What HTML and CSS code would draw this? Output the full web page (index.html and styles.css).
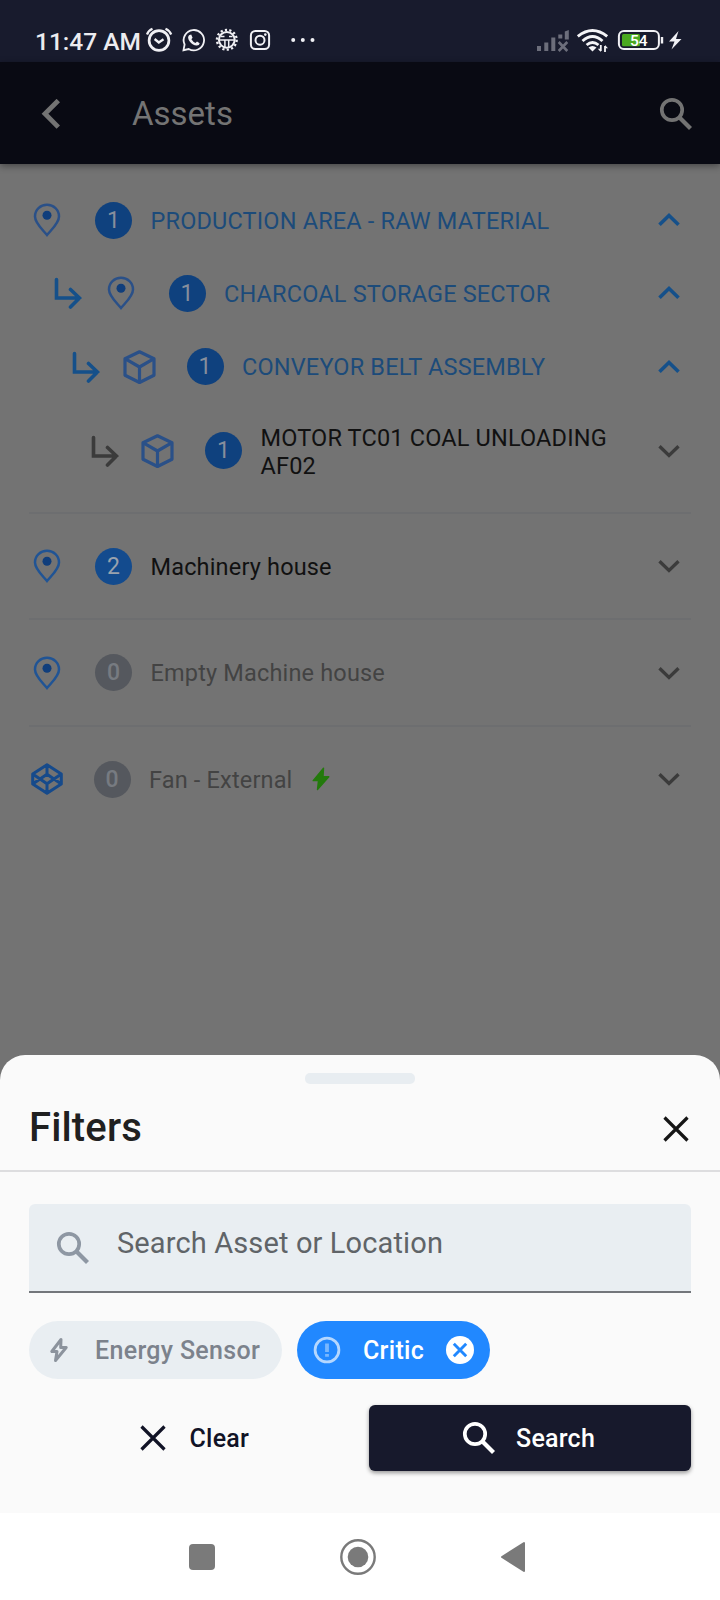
FILE: index.html
```
<!DOCTYPE html>
<html lang="en">
<head>
<meta charset="utf-8">
<title>Assets</title>
<link rel="stylesheet" href="styles.css">
</head>
<body>
<svg class="defs" width="0" height="0">
  <symbol id="pin" viewBox="0 0 36 36"><path d="M18 33C13 27 6 21 6 14.400A12 11.600 0 0 1 30 14.400C30 21 23 27 18 33Z" fill="none" stroke="currentColor" stroke-width="2.500"/><circle cx="18" cy="13.200" r="4.500" class="pin-dot"/></symbol>
  <symbol id="cube" viewBox="0 0 36 36"><path d="M18.500 2.800L33 9.700V26.300L18.500 33.500L4 26.300V9.700ZM4 9.700L18.500 18L33 9.700M18.500 18V33.500" fill="none" stroke="currentColor" stroke-width="3.200" stroke-linejoin="round"/></symbol>
  <symbol id="component" viewBox="0 0 36 36"><path d="M18 3.800L32.300 13V23L18 32.200L3.700 23V13ZM18 3.800V13.200M18 22.800V32.200M3.700 13L18 22.800L32.300 13M3.700 23L18 13.200L32.300 23" fill="none" stroke="currentColor" stroke-width="3" stroke-linejoin="round"/></symbol>
  <symbol id="sub" viewBox="0 0 28 32"><path d="M2.500 2.500V21H25.500M16.500 12.500L25.500 21L16.500 30" fill="none" stroke="currentColor" stroke-width="3.600" stroke-linecap="round" stroke-linejoin="miter"/></symbol>
  <symbol id="up" viewBox="0 0 24 16"><path d="M2.500 12.700L12 3.500L21.500 12.700" fill="none" stroke="currentColor" stroke-width="3.600"/></symbol>
  <symbol id="down" viewBox="0 0 24 16"><path d="M2.500 3.300L12 12.500L21.500 3.300" fill="none" stroke="currentColor" stroke-width="3.300"/></symbol>
  <symbol id="search" viewBox="0 0 34 34"><circle cx="13" cy="13" r="10.200" fill="none" stroke="currentColor" stroke-width="3.700"/><path d="M20.500 20.500L31.500 31.500" fill="none" stroke="currentColor" stroke-width="4.200"/></symbol>
  <symbol id="close" viewBox="0 0 26 26"><path d="M1.500 1.500L24.500 24.500M24.500 1.500L1.500 24.500" fill="none" stroke="currentColor" stroke-width="3.200"/></symbol>
</svg>
<div class="phone">
  <header class="status">
    <span class="clock">11:47 AM</span>
    <svg class="notices" width="178" height="30" viewBox="142 25 178 30" fill="none" stroke="#f0f0f4">
      <circle cx="159" cy="40.500" r="9.900" stroke-width="2.700"/>
      <path d="M147 34.500Q148.500 30.500 152.500 28.800M171.200 34.500Q169.500 30.500 165.500 28.800" stroke-width="2.300"/>
      <path d="M154.600 39L158.800 42.500L163.500 39.200" stroke-width="2.300"/>
      <path d="M183.500 50.200L184.600 44.500A10.200 10.200 0 1 1 188.700 49Z" stroke-width="1.800"/>
      <path d="M189 35.300L191.200 34.500L192.600 37.800L191.400 39.300Q193 42 195.500 43L197 41.500L199.700 43.200Q199.300 45.800 196.500 45.600C191.500 44.900 188 40.300 188.100 37Z" fill="#f0f0f4" stroke="none"/>
      <circle cx="226.800" cy="39.800" r="7.900" stroke-width="2"/>
      <circle cx="226.800" cy="39.800" r="9.900" stroke-width="2.300" stroke-dasharray="2.200 2.243"/>
      <path d="M218.500 40H235M224.900 40V48M228.700 40V48" stroke-width="1.500"/>
      <path d="M221 36.500H224.500M229 36.500H232.500" stroke-width="1.300"/>
      <rect x="250.900" y="30.900" width="18.200" height="18.200" rx="4.500" stroke-width="2"/>
      <circle cx="260" cy="40.200" r="4.500" stroke-width="2"/>
      <circle cx="265.300" cy="34.600" r="1.300" fill="#f0f0f4" stroke="none"/>
      <g fill="#f0f0f4" stroke="none"><circle cx="293.200" cy="40" r="2"/><circle cx="302.800" cy="40" r="2"/><circle cx="312.500" cy="40" r="2"/></g>
    </svg>
    <svg class="signals" width="150" height="30" viewBox="534 25 150 30" fill="none">
      <path d="M537 46H541V51H537ZM544.300 42.500H548.300V51H544.300ZM551.300 37.500H555.300V51H551.300ZM558.300 34.500H562.300V38.500H558.300ZM564.800 31.500L568.800 30V39.500H564.800Z" fill="#6c6e7b"/>
      <path d="M558.700 42L567.300 51M567.300 42L558.700 51" stroke="#6c6e7b" stroke-width="2.600"/>
      <g stroke="#f4f4f7" stroke-width="2.900"><path d="M577.800 36.300Q592.500 24.500 607.200 36.300"/><path d="M582.500 41Q592.500 32 602.500 41"/><path d="M586.600 45Q592.500 40 598.500 45"/></g>
      <path d="M588.500 47.500Q592.500 44.500 596.500 47.500L592.500 51.500Z" fill="#f4f4f7"/>
      <path d="M600.800 45V51M605 46V52" stroke="#f4f4f7" stroke-width="1.800"/>
      <path d="M597.800 48.800L600.800 52V48.800ZM608 48.300L605 45V48.300Z" fill="#f4f4f7"/>
      <rect x="618.900" y="31" width="40" height="18" rx="5" stroke="#f0f0f4" stroke-width="2"/>
      <rect x="622" y="34" width="18" height="12.300" rx="1.500" fill="#4aa91f"/>
      <path d="M662 37V43.500" stroke="#f0f0f4" stroke-width="2.400"/>
      <path d="M678.500 31L669 41.500H674.500L671.500 49.500L681.500 39H676Z" fill="#f0f0f4"/>
      <text class="charge" x="638.800" y="45.600">54</text>
    </svg>
  </header>
  <nav class="appbar">
    <svg class="back" width="20" height="30" viewBox="0 0 20 30"><path d="M17.300 1.500L4 14.800L17.300 28.100" fill="none" stroke="#737373" stroke-width="4.800"/></svg>
    <h1>Assets</h1>
    <svg class="find" width="34" height="34"><use href="#search"/></svg>
  </nav>
  <main class="tree">
    <div class="row open"><svg class="kind"><use href="#pin"/></svg><b class="badge">1</b><span class="label">PRODUCTION AREA - RAW MATERIAL</span><svg class="chev"><use href="#up"/></svg></div>
    <div class="row open d1"><svg class="sub"><use href="#sub"/></svg><svg class="kind"><use href="#pin"/></svg><b class="badge">1</b><span class="label">CHARCOAL STORAGE SECTOR</span><svg class="chev"><use href="#up"/></svg></div>
    <div class="row open d2"><svg class="sub"><use href="#sub"/></svg><svg class="kind"><use href="#cube"/></svg><b class="badge">1</b><span class="label">CONVEYOR BELT ASSEMBLY</span><svg class="chev"><use href="#up"/></svg></div>
    <div class="row leaf d3"><svg class="sub"><use href="#sub"/></svg><svg class="kind"><use href="#cube"/></svg><b class="badge">1</b><span class="label">MOTOR TC01 COAL UNLOADING<br>AF02</span><svg class="chev"><use href="#down"/></svg></div>
    <hr>
    <div class="row top"><svg class="kind"><use href="#pin"/></svg><b class="badge">2</b><span class="label">Machinery house</span><svg class="chev"><use href="#down"/></svg></div>
    <hr>
    <div class="row top empty"><svg class="kind"><use href="#pin"/></svg><b class="badge">0</b><span class="label">Empty Machine house</span><svg class="chev"><use href="#down"/></svg></div>
    <hr>
    <div class="row top empty fan"><svg class="kind"><use href="#component"/></svg><b class="badge">0</b><span class="label">Fan - External</span><svg class="bolt" width="18" height="24" viewBox="0 0 18 24"><path d="M11.500 1.200L1.200 13.600H6.500L5.500 22.600L16.800 9.800H11Z" fill="#237a0c" stroke="#237a0c" stroke-width="1.400" stroke-linejoin="round"/></svg><svg class="chev"><use href="#down"/></svg></div>
  </main>
  <section class="sheet">
    <div class="handle"></div>
    <div class="sheet-head"><h2>Filters</h2><svg width="26" height="26"><use href="#close"/></svg></div>
    <div class="field"><svg width="34" height="34"><use href="#search"/></svg><span>Search Asset or Location</span></div>
    <div class="chips">
      <div class="chip energy"><svg width="20" height="28" viewBox="0 0 20 28"><path d="M12 3.500L2.800 15.500H8L6.500 24.500L17.200 11.500H11.700Z" fill="none" stroke="#8c939d" stroke-width="3" stroke-linejoin="round"/></svg><span>Energy Sensor</span></div>
      <div class="chip critic"><svg width="28" height="28" viewBox="0 0 28 28"><circle cx="14" cy="14" r="11.900" fill="none" stroke="#b4d7ff" stroke-width="2.800"/><path d="M14 7.500V16M14 18V20.800" stroke="#78b7ff" stroke-width="3.800"/></svg><span>Critic</span><svg class="remove" width="28" height="28" viewBox="0 0 28 28"><circle cx="14" cy="14" r="14" fill="#fff"/><path d="M7.800 7.800L20.200 20.200M20.200 7.800L7.800 20.200" stroke="#2188ff" stroke-width="2.900"/></svg></div>
    </div>
    <div class="actions">
      <div class="clear"><svg width="26" height="26"><use href="#close"/></svg><span>Clear</span></div>
      <div class="go"><svg width="34" height="34"><use href="#search"/></svg><span>Search</span></div>
    </div>
  </section>
  <footer class="navbar">
    <svg width="26" height="26"><rect width="26" height="26" rx="4" fill="#7a7a7a"/></svg>
    <svg width="36" height="36"><circle cx="18" cy="18" r="16.700" fill="none" stroke="#7a7a7a" stroke-width="2.400"/><circle cx="18" cy="18" r="10.300" fill="#7a7a7a"/></svg>
    <svg width="26" height="32"><path d="M24 2V30L2 16Z" fill="#7a7a7a" stroke="#7a7a7a" stroke-width="2" stroke-linejoin="round"/></svg>
  </footer>
</div>
</body>
</html>
```
FILE: styles.css
```
* { box-sizing: border-box; }
body { margin: 0; font-family: Roboto, "Liberation Sans", sans-serif; background: #737373; }
svg { display: block; flex: none; }
span, h1, h2 { white-space: nowrap; }
.defs { position: absolute; }
.phone { width: 720px; height: 1600px; display: flex; flex-direction: column; overflow: hidden; background: #737373; }

.status { height: 62px; flex: none; display: flex; background: #181b2d; }
.clock { margin-left: 35px; width: 107px; padding-top: 27px; font-size: 24.500px; line-height: 29px; font-weight: 500; color: #ececf0; }
.notices { margin-top: 25px; }
.signals { margin: 25px 0 0 214px; }
.charge { font: 500 15.500px Roboto, sans-serif; fill: #fff; text-anchor: middle; }

.appbar { height: 102px; flex: none; padding-top: 1px; display: flex; align-items: center; background: #090a13; box-shadow: 0 2px 7px rgba(0, 0, 0, .4); }
.back { margin-left: 41px; }
.appbar h1 { margin: 1px 0 0 71px; font-size: 33px; line-height: 40px; font-weight: 400; color: #747474; }
.find { margin: 0 27px 0 auto; color: #737373; }

.tree { flex: 1; padding: 19.500px 29px 0; }
.row { height: 73.300px; display: flex; align-items: center; color: #3b3b3b; }
.kind { width: 36px; height: 36px; color: #2a5088; }
.pin-dot { fill: #103e7c; }
.badge { width: 37px; height: 37px; margin-left: 30px; flex: none; border-radius: 50%; background: #0f417e; color: #868e9c; font-size: 23px; line-height: 37px; font-weight: 400; text-align: center; }
.label { margin-left: 18.500px; padding-top: 1px; font-size: 23.500px; line-height: 28px; letter-spacing: .17px; color: #111; }
.chev { width: 24px; height: 16px; margin: 0 10px 0 auto; }
.sub { width: 28px; height: 32px; margin-right: 20.500px; }
.open .sub, .open .chev { color: #15508a; }
.open .label { color: #1c4b7a; }
.d1 { padding-left: 25px; }
.d2 { padding-left: 43px; }
.d3 { padding-left: 61.500px; }
.leaf { height: 95px; }
.leaf .label { padding-top: 2px; }
.tree hr { height: 2px; margin: 0; border: 0; background: #6d6e70; }
.leaf + hr { margin-top: 13.500px; }
.top { height: 104.500px; }
.top .kind { color: #205495; }
.top .badge { background: #134b8e; color: #9aa2ad; }
.empty .label { color: #434343; }
.empty .badge { background: #55585e; color: #777b81; font-weight: 500; }
.fan .badge { margin-left: 28.500px; }
.fan .kind { color: #164a8b; }
.fan .bolt { margin-left: 19px; }

.sheet { height: 458px; flex: none; background: #fafafa; border-radius: 25px 25px 0 0; padding-top: 18px; }
.handle { width: 110px; height: 11px; margin: 0 auto; border-radius: 5px; background: #e8edf1; }
.sheet-head { height: 88px; padding: 0 31px 0 29px; display: flex; justify-content: space-between; border-bottom: 2px solid #dddddf; }
.sheet-head h2 { margin: 21px 0 0; font-size: 40px; line-height: 46px; letter-spacing: .15px; font-weight: 500; color: #202020; }
.sheet-head svg { margin-top: 32px; color: #151515; }
.field { height: 89px; margin: 32px 29px 0; padding: 0 27px; display: flex; background: #e9eef2; border-radius: 6px 6px 0 0; border-bottom: 2px solid #73767b; }
.field svg { margin-top: 27px; color: #8e97a3; }
.field span { margin: 20px 0 0 27px; font-size: 29px; line-height: 38px; letter-spacing: .13px; color: #606468; }
.chips { display: flex; gap: 15px; margin: 28px 29px 0; }
.chip { height: 58px; border-radius: 29px; display: flex; align-items: center; font-size: 25px; font-weight: 500; }
.energy { width: 253px; padding-left: 20px; background: #e9eef2; color: #7c828c; }
.energy span { margin-left: 26px; letter-spacing: .32px; }
.critic { width: 193px; padding-left: 16px; background: #2188ff; color: #fff; }
.critic span { margin-left: 22px; letter-spacing: .3px; }
.critic .remove { margin: 0 16px 0 auto; }
.actions { margin: 26px 29px 0; display: grid; grid-template-columns: 325px 1fr; column-gap: 15px; font-size: 25px; font-weight: 500; }
.clear, .go { height: 66px; display: flex; align-items: center; letter-spacing: .25px; }
.clear { padding-left: 111px; color: #111326; }
.clear span { margin-left: 23.500px; }
.go { padding-left: 93px; border-radius: 6px; color: #fff; background: #17192c; box-shadow: 0 2px 4px rgba(0, 0, 0, .4); }
.go span { margin-left: 20px; }

.navbar { height: 87px; flex: none; padding-left: 189px; display: flex; align-items: center; background: #fff; }
.navbar svg + svg { margin-left: 124.500px; }
.navbar svg:last-child { margin-left: 124px; }
```
